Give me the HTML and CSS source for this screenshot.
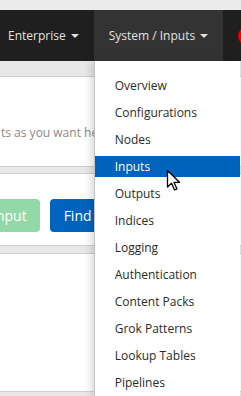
FILE: index.html
```html
<!DOCTYPE html>
<html lang="en">
  <head>
    <meta charset="UTF-8">
    <title>System / Inputs</title>
    <link rel="stylesheet" href="styles.css">
  </head>
  <body>
    <div class="barra-top"></div>
    <ul class="navbar">
        <li class="nav-item nav-first">Enterprise <span class="caret"></span></li>
        <li class="nav-item nav-activo">System / Inputs <span class="caret"></span>
            <ul class="dropdown">
                <li><a href="#">Overview</a></li>
                <li><a href="#">Configurations</a></li>
                <li><a href="#">Nodes</a></li>
                <li class="activo"><a href="#">Inputs</a></li>
                <li><a href="#">Outputs</a></li>
                <li><a href="#">Indices</a></li>
                <li><a href="#">Logging</a></li>
                <li><a href="#">Authentication</a></li>
                <li><a href="#">Content Packs</a></li>
                <li><a href="#">Grok Patterns</a></li>
                <li><a href="#">Lookup Tables</a></li>
                <li><a href="#">Pipelines</a></li>
            </ul>
            <svg class="cursor" width="16" height="24" viewBox="0 0 16 24">
                <path d="M1.5 1.5 L1.5 18 L5.5 14.2 L8.6 21 L11 19.9 L8 13.3 L13.5 13.3 Z" fill="#fff" stroke="#000" stroke-width="1.3" stroke-linejoin="round"/>
            </svg>
        </li>
        <li class="nav-item nav-badge"><span class="badge"></span></li>
    </ul>
    <div class="contenido">
        <div class="caja caja-texto">
            <p class="descripcion">ts as you want here.</p>
        </div>
        <div class="caja caja-botones">
            <button class="boton boton-verde">Input</button>
            <button class="boton boton-azul">Find</button>
        </div>
        <div class="caja caja-final"></div>
    </div>
  </body>
</html>
```

FILE: styles.css
```css
html, body {
    padding: 0;
    margin: 0;
    border: 0;
    width: 100%;
    height: 100%;
    overflow: hidden;
}

body {
    font-family: "Open Sans", "DejaVu Sans", sans-serif;
    background-color: #e8e8e8;
}

.barra-top {
    height: 10px;
    background-color: #ebebeb;
}

.navbar {
    display: flex;
    list-style: none;
    margin: 0;
    padding: 0;
    height: 51px;
    background-color: #1f1f1f;
    white-space: nowrap;
}

.nav-item {
    position: relative;
    display: flex;
    align-items: center;
    padding: 0 15px;
    color: #e2e2e2;
    font-size: 12px;
}

.nav-first {
    padding-left: 8px;
}

.nav-activo {
    background-color: #333;
}

.nav-badge {
    flex: 1;
    min-width: 0;
    overflow: hidden;
    padding-right: 0;
}

.caret {
    display: inline-block;
    margin-left: 5px;
    width: 0;
    height: 0;
    border-top: 4px solid #e2e2e2;
    border-left: 4px solid transparent;
    border-right: 4px solid transparent;
}

.badge {
    display: block;
    flex-shrink: 0;
    width: 18px;
    height: 18px;
    border-radius: 50%;
    background-color: #e00;
}

/* menu desplegable */
.dropdown {
    position: absolute;
    top: 100%;
    left: 0;
    z-index: 10;
    width: 145px;
    height: 321px;
    overflow: hidden;
    list-style: none;
    margin: 0;
    padding: 14px 0 0;
    background-color: #fff;
    border-left: 1px solid #c4c4c4;
    box-shadow: -3px 0 8px rgba(0, 0, 0, 0.15);
}

.dropdown li {
    margin-bottom: 6px;
}

.dropdown a {
    display: block;
    padding: 0 20px;
    line-height: 21px;
    font-size: 12px;
    color: #2b2b2b;
    text-decoration: none;
}

.dropdown .activo a {
    background-color: #0063be;
    color: #fff;
}

.cursor {
    position: absolute;
    top: 159px;
    left: 72px;
    z-index: 20;
}

/* contenido */
.contenido {
    padding-top: 15px;
}

.caja {
    background-color: #fff;
    border-top: 1px solid #cfcfcf;
    border-bottom: 1px solid #cfcfcf;
}

.caja-texto {
    height: 89px;
    margin-bottom: 6px;
}

.descripcion {
    margin: 47px 0 0 1px;
    font-size: 12px;
    color: #8a8a8a;
    white-space: nowrap;
}

.caja-botones {
    display: flex;
    gap: 10px;
    height: 73px;
    margin-bottom: 7px;
    padding-top: 25px;
    box-sizing: border-box;
}

.boton {
    height: 33px;
    padding: 0 14px;
    border: none;
    border-radius: 4px;
    font-family: inherit;
    font-size: 14px;
    color: #fff;
}

.boton-verde {
    margin-left: -22px;
    padding-right: 13px;
    background-color: #92d9a7;
}

.boton-azul {
    background-color: #0063be;
}

.caja-final {
    height: 137px;
}
```
